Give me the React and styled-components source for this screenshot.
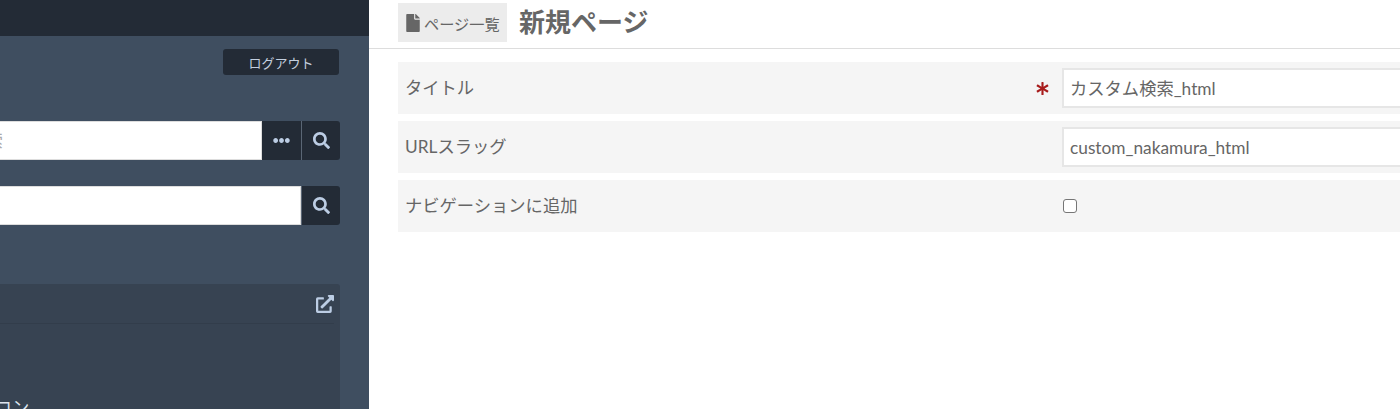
import React from 'react'
import styled, { createGlobalStyle } from 'styled-components'
import { FaAsterisk, FaEllipsisH, FaExternalLinkAlt, FaFile, FaSearch } from 'react-icons/fa'

const GlobalStyle = createGlobalStyle`
  html, body { margin: 0; padding: 0; height: 100%; background: #fff; overflow: hidden; }
  body { font-family: Lato, "Noto Sans CJK JP", sans-serif; color: #666; }
  #root { height: 100%; }
`

const Page = styled.div`
  display: flex;
  height: 100vh;
  overflow: hidden;
`

const Sidebar = styled.aside`
  flex: 0 0 369px;
  display: flex;
  flex-direction: column;
  background: #3f4e60;
  overflow: hidden;
`

const TopBar = styled.div`
  flex: 0 0 36px;
  background: #232b36;
`

const SideBody = styled.div`
  width: 640px;
  margin-left: -300px;
  display: flex;
  flex-direction: column;
`

const LogoutRow = styled.div`
  display: flex;
  justify-content: flex-end;
  padding: 13px 1px 0 0;
`

const LogoutButton = styled.button`
  width: 116px;
  height: 26px;
  border: 0;
  border-radius: 3px;
  background: #232b36;
  color: #c3cfdf;
  font: 13px Lato, "Noto Sans CJK JP", sans-serif;
  padding: 0;
`

const SearchGroup = styled.div`
  display: flex;
  height: 39px;
  margin-top: ${p => p.$top}px;
`

const SearchInput = styled.input`
  flex: 1;
  min-width: 0;
  box-sizing: border-box;
  border: 1px solid #ddd;
  background: #fff;
  padding: 0 258px 0 12px;
  font: 17.3px Lato, "Noto Sans CJK JP", sans-serif;
  text-align: right;
  &::placeholder { color: #aaa; }
`

const IconButton = styled.button`
  flex: 0 0 38px;
  display: flex;
  align-items: center;
  justify-content: center;
  padding: 0;
  border: 0;
  border-left: ${p => (p.$divided ? '1px solid #5a6675' : '0')};
  background: #232b36;
  color: #bccde4;
  font-size: 17px;
  box-sizing: content-box;
  &:last-child { border-radius: 0 3px 3px 0; }
`

const DotsButton = styled(IconButton)`
  flex-basis: 39px;
  font-size: 17px;
`

const Panel = styled.section`
  margin-top: 59px;
  height: 140px;
  background: #374352;
  border-radius: 3px 3px 0 0;
  padding: 0 6px;
`

const PanelHead = styled.div`
  height: 39px;
  display: flex;
  align-items: center;
  justify-content: flex-end;
  border-bottom: 1px solid #323d4b;
  color: #bccde4;
  font-size: 18px;
`

const TreeLabel = styled.div`
  margin-top: 70px;
  padding-left: 255px;
  color: #dde4ee;
  font-size: 17.3px;
`

const Main = styled.main`
  flex: 1;
  min-width: 0;
  overflow: hidden;
`

const Header = styled.header`
  height: 49px;
  display: flex;
  align-items: flex-start;
  gap: 12px;
  padding: 3px 0 0 29px;
  box-sizing: border-box;
  border-bottom: 1px solid #ddd;
`

const BackLink = styled.a`
  height: 39px;
  width: 109px;
  box-sizing: border-box;
  display: flex;
  align-items: center;
  gap: 2px;
  padding-left: 6px;
  background: #ececec;
  color: #666;
  font-size: 15.2px;
  white-space: nowrap;
  svg { font-size: 18px; flex: none; }
`

const Title = styled.h1`
  margin: 0;
  line-height: 39px;
  font-size: 26px;
  font-weight: 700;
  color: #666;
  white-space: nowrap;
`

const Form = styled.form`
  display: flex;
  flex-direction: column;
  gap: 7px;
  padding: 13px 0 0 29px;
`

const Row = styled.div`
  height: 52px;
  display: flex;
  align-items: center;
  background: #f5f5f5;
  padding-left: 7px;
`

const Label = styled.label`
  flex: 0 0 657px;
  display: flex;
  align-items: center;
  justify-content: space-between;
  padding-bottom: 4px;
  font-size: 17.3px;
  color: #666;
`

const Required = styled.span`
  display: flex;
  color: #a81c1c;
  font-size: 13px;
  margin: 4px 13px 0 0;
`

const TextInput = styled.input`
  flex: 0 0 500px;
  height: 40px;
  box-sizing: border-box;
  border: 2px solid #e6e6e6;
  background: #fff;
  padding: 0 6px ${p => (p.$raised ? '2px' : '0')};
  color: #666;
  font: 17.3px Lato, "Noto Sans CJK JP", sans-serif;
`

const CheckBox = styled.input`
  appearance: none;
  flex: none;
  width: 14px;
  height: 14px;
  margin: 0 0 0 1px;
  background: #fff;
  border: 1px solid #767676;
  border-radius: 3px;
`

const App = () => {
  return (
    <Page>
      <GlobalStyle />
      <Sidebar>
        <TopBar />
        <SideBody>
          <LogoutRow>
            <LogoutButton>ログアウト</LogoutButton>
          </LogoutRow>
          <SearchGroup $top={46}>
            <SearchInput placeholder="キーワード検索" readOnly />
            <DotsButton><FaEllipsisH /></DotsButton>
            <IconButton $divided><FaSearch /></IconButton>
          </SearchGroup>
          <SearchGroup $top={26}>
            <SearchInput readOnly />
            <IconButton $divided><FaSearch /></IconButton>
          </SearchGroup>
          <Panel>
            <PanelHead><FaExternalLinkAlt /></PanelHead>
            <TreeLabel>アイコン</TreeLabel>
          </Panel>
        </SideBody>
      </Sidebar>
      <Main>
        <Header>
          <BackLink><FaFile />ページ一覧</BackLink>
          <Title>新規ページ</Title>
        </Header>
        <Form>
          <Row>
            <Label>タイトル<Required><FaAsterisk /></Required></Label>
            <TextInput $raised defaultValue="カスタム検索_html" />
          </Row>
          <Row>
            <Label>URLスラッグ</Label>
            <TextInput defaultValue="custom_nakamura_html" />
          </Row>
          <Row>
            <Label>ナビゲーションに追加</Label>
            <CheckBox type="checkbox" />
          </Row>
        </Form>
      </Main>
    </Page>
  )
}

export default App
